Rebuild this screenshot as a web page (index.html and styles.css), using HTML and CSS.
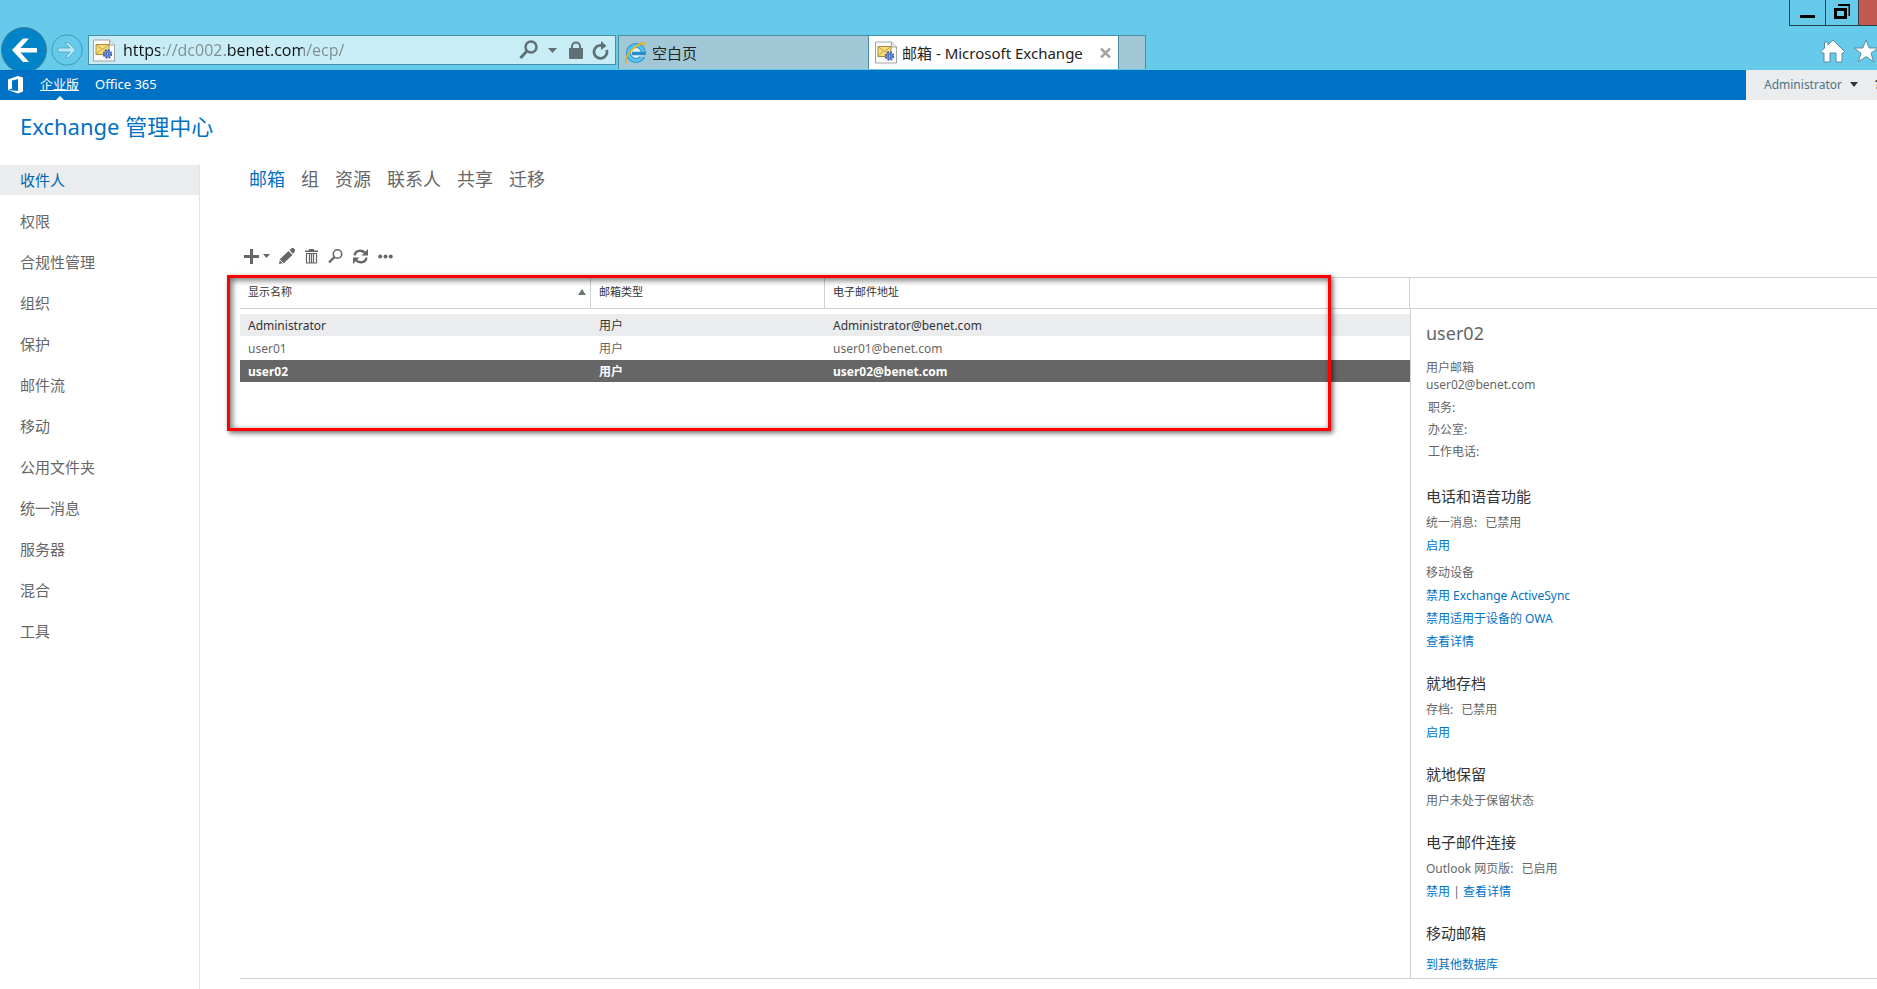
FILE: index.html
```html
<!DOCTYPE html>
<html lang="zh-CN">
<head>
<meta charset="utf-8">
<title>邮箱 - Microsoft Exchange</title>
<link rel="stylesheet" href="styles.css">
</head>
<body>
<svg class="defs" aria-hidden="true">
  <symbol id="page-icon" viewBox="0 0 22 22">
    <path d="M.5.5h16l5 5v16H.5z" fill="#fbfbfb" stroke="#a3a3a3"/>
    <path d="M16.500.5v5h5" fill="#e4e4e4" stroke="#a3a3a3"/>
    <path d="M3 5h13v10H3z" fill="#f6dc78" stroke="#a98b3c"/>
    <path d="M3 5l6.500 5L16 5M3 15l5-5M16 15l-5-5" fill="none" stroke="#b3923a" stroke-width=".8"/>
    <circle cx="14.500" cy="14.500" r="3.500" fill="#6d8fdc" stroke="#3f5fb3" stroke-width="2.400" stroke-dasharray="1.700 1.050"/>
    <circle cx="14.500" cy="14.500" r="2.800" fill="#6d8fdc"/>
    <circle cx="14.500" cy="14.500" r="1.200" fill="#dbe5fa" stroke="#2d4a9a" stroke-width=".8"/>
  </symbol>
</svg>
<div class="app">
  <header class="browser">
    <div class="window-controls">
      <button class="win-btn minimize" aria-label="最小化"><svg width="16" height="16" viewBox="0 0 16 16"><path d="M0 10h15v3H0z"/></svg></button>
      <button class="win-btn restore" aria-label="还原"><svg width="17" height="16" viewBox="0 0 17 16"><path d="M4 0h12v12h-1.500V2H4zM0 4h13v11H0zm3 3v5h7V7z" fill-rule="evenodd"/></svg></button>
      <button class="win-btn close" aria-label="关闭"></button>
    </div>
    <div class="nav-row">
      <button class="nav-btn back" aria-label="后退"><svg width="46" height="46" viewBox="0 0 46 46"><circle cx="23" cy="23" r="22.500" fill="#0083c7" stroke="#3f7f95"/><path d="M11 23L22 11.500h6L19.500 21H36v4.500H19.500L28 35h-6z" fill="#fff"/></svg></button>
      <button class="nav-btn forward" aria-label="前进"><svg width="32" height="32" viewBox="0 0 32 32"><circle cx="16" cy="16" r="15.200" fill="none" stroke="#4597b4"/><path d="M24.500 16L17.500 8.500H14l5 5.500H7v4h12l-5 5.500h3.500z" fill="#b9e9f8" stroke="#4aa1bf" stroke-width=".8"/></svg></button>
      <form class="address">
        <svg width="22" height="23"><use href="#page-icon"/></svg>
        <input class="url" type="text" aria-label="地址" value="https://dc002.benet.com/ecp/">
        <button type="button" class="plain" aria-label="搜索"><svg width="19" height="20" viewBox="0 0 19 20"><circle cx="12" cy="7" r="5.500" fill="none" stroke="#607175" stroke-width="2.500"/><path d="M8 11l-6.500 7" stroke="#607175" stroke-width="3"/></svg></button>
        <button type="button" class="plain caret" aria-label="搜索选项"><svg width="9" height="5" viewBox="0 0 9 5"><path d="M0 0h9L4.500 5z" fill="#607175"/></svg></button>
        <button type="button" class="plain lock" aria-label="安全报告"><svg width="14" height="18" viewBox="0 0 14 18"><path d="M0 7h14v10q0 1-1 1H1q-1 0-1-1z" fill="#607175"/><path d="M3 8V5.500C3 0 11 0 11 5.500V8" fill="none" stroke="#607175" stroke-width="2"/></svg></button>
        <button type="button" class="plain" aria-label="刷新"><svg width="17" height="19" viewBox="0 0 17 19"><path d="M10 4.500A6.500 6.500 0 1 0 14.700 9" fill="none" stroke="#607175" stroke-width="2.800"/><path d="M9 0l5.500 5L9 9z" fill="#607175"/></svg></button>
      </form>
      <div class="tabs">
        <button class="tab idle"><svg width="23" height="23" viewBox="0 0 23 23"><circle cx="12" cy="12" r="7.500" fill="#d9f2fb" stroke="#2b8ecb" stroke-width="5"/><circle cx="12" cy="12" r="7.500" fill="none" stroke="#59c5f0" stroke-width="3"/><path d="M8 12.500h13" stroke="#2b8ecb" stroke-width="3.500"/><path d="M16 16h6v-2h-6z" fill="#a2c8d7"/><path d="M3 22C-2 20 6 7 15 3c5-2.500 7-2 6 1.500C20 1.500 17 3 13 5.500 6 10-1 20 3 22z" fill="#ffd23c" stroke="#e5a812" stroke-width=".8"/></svg><span>空白页</span></button>
        <div class="tab active"><svg width="22" height="23"><use href="#page-icon"/></svg><span class="tab-title">邮箱 - Microsoft Exchange</span><button class="plain" aria-label="关闭选项卡"><svg width="11" height="10" viewBox="0 0 11 10"><path d="M1 .5l9 9M10 .5l-9 9" stroke="#a3a3a3" stroke-width="2.500"/></svg></button></div>
        <button class="tab new" aria-label="新建选项卡"></button>
      </div>
      <div class="tools">
        <button class="plain" aria-label="主页"><svg width="26" height="24" viewBox="0 0 26 24"><path d="M13 1l11.500 11.500-1 1.500H22v9h-6v-9h-6v9H4v-9H2L1 12.500 4.500 9V3H8v3z" fill="#fff" stroke="#5b8b9c"/></svg></button>
        <button class="plain" aria-label="收藏夹"><svg width="26" height="24" viewBox="0 0 26 24"><path d="M13 1l3.200 8H25l-7 5.200 2.600 8.600L13 17.600l-7.600 5.200L8 14.200 1 9h8.800z" fill="#fff" stroke="#5b8b9c"/></svg></button>
      </div>
    </div>
  </header>

  <nav class="suite">
    <svg class="office" width="17" height="18" viewBox="0 0 17 18"><path d="M0 3.500L10 0l5 1.500v14L10 17.500 0 14l10 1V3L4 4.500v8.200L0 14z" fill="#fff"/></svg>
    <a class="suite-link current" href="#">企业版</a>
    <a class="suite-link" href="#">Office 365</a>
    <div class="me">
      <button class="account">Administrator<svg width="8" height="5" viewBox="0 0 8 5"><path d="M0 0h8L4 5z" fill="#333"/></svg></button>
      <button class="help" aria-label="帮助">?</button>
    </div>
  </nav>

  <h1 class="title">Exchange 管理中心</h1>

  <div class="body">
    <nav class="side">
      <a class="side-link selected" href="#">收件人</a>
      <a class="side-link" href="#">权限</a>
      <a class="side-link" href="#">合规性管理</a>
      <a class="side-link" href="#">组织</a>
      <a class="side-link" href="#">保护</a>
      <a class="side-link" href="#">邮件流</a>
      <a class="side-link" href="#">移动</a>
      <a class="side-link" href="#">公用文件夹</a>
      <a class="side-link" href="#">统一消息</a>
      <a class="side-link" href="#">服务器</a>
      <a class="side-link" href="#">混合</a>
      <a class="side-link" href="#">工具</a>
    </nav>
    <main class="main">
      <nav class="pivots">
        <a class="pivot selected" href="#">邮箱</a>
        <a class="pivot" href="#">组</a>
        <a class="pivot" href="#">资源</a>
        <a class="pivot" href="#">联系人</a>
        <a class="pivot" href="#">共享</a>
        <a class="pivot" href="#">迁移</a>
      </nav>
      <div class="toolbar">
        <button class="plain add" aria-label="新建"><svg width="15" height="15" viewBox="0 0 15 15"><path d="M6 0h3v6h6v3H9v6H6V9H0V6h6z" fill="#666"/></svg><svg width="7" height="4" viewBox="0 0 7 4"><path d="M0 0h7L3.500 4z" fill="#666"/></svg></button>
        <button class="plain" aria-label="编辑"><svg width="16" height="16" viewBox="0 0 16 16"><path d="M0 16l1-5 8.500-8 4 4L5 15zM10.500 2L13 0h1.500L16 1.500V3l-2 3z" fill="#666"/><path d="M1 12l3 3" stroke="#fff"/></svg></button>
        <button class="plain" aria-label="删除"><svg width="13" height="15" viewBox="0 0 13 15"><path d="M4 0h5v1.500h4V3H0V1.500h4z" fill="#666"/><path d="M1.500 4.500h10v9.500h-10zM4.500 4v10M6.500 4v10M8.500 4v10" fill="none" stroke="#666" stroke-width="1.200"/></svg></button>
        <button class="plain" aria-label="搜索"><svg width="15" height="15" viewBox="0 0 15 15"><circle cx="9.500" cy="5" r="4.200" fill="none" stroke="#666" stroke-width="1.600"/><path d="M6.500 8L1 13.500" stroke="#666" stroke-width="2.400"/></svg></button>
        <button class="plain" aria-label="刷新"><svg width="15" height="15" viewBox="0 0 14 14"><path d="M1.500 6C2 1 8.500.5 11 3.500M12.500 8C12 13 5.500 13.500 3 10.500" fill="none" stroke="#666" stroke-width="2.200"/><path d="M14 0v6H8zM0 14V8h6z" fill="#666"/></svg></button>
        <button class="plain" aria-label="更多"><svg width="15" height="5" viewBox="0 0 15 5"><circle cx="2.200" cy="2.500" r="2"/><circle cx="7.500" cy="2.500" r="2"/><circle cx="12.800" cy="2.500" r="2"/></svg></button>
      </div>
      <div class="panes">
        <section class="list">
          <table class="grid">
            <colgroup><col class="col-name"><col class="col-type"><col></colgroup>
            <thead>
              <tr><th><div class="sort">显示名称<svg width="8" height="6" viewBox="0 0 8 6"><path d="M4 0l4 6H0z" fill="#667766"/></svg></div></th><th>邮箱类型</th><th>电子邮件地址</th></tr>
            </thead>
            <tbody>
              <tr class="hover"><td>Administrator</td><td>用户</td><td>Administrator@benet.com</td></tr>
              <tr><td>user01</td><td>用户</td><td>user01@benet.com</td></tr>
              <tr class="picked"><td>user02</td><td>用户</td><td>user02@benet.com</td></tr>
            </tbody>
          </table>
          <div class="marker"></div>
        </section>
        <aside class="detail">
          <div class="detail-head"></div>
          <div class="detail-body">
            <h2 class="name">user02</h2>
            <p class="tight">用户邮箱</p>
            <p class="tight">user02@benet.com</p>
            <div class="fields"><p>职务:</p><p>办公室:</p><p>工作电话:</p></div>
            <section class="group">
              <h3>电话和语音功能</h3>
              <p>统一消息:<span class="value">已禁用</span></p>
              <p><a href="#">启用</a></p>
              <div class="subgroup">
                <p>移动设备</p>
                <p><a href="#">禁用 Exchange ActiveSync</a></p>
                <p><a href="#">禁用适用于设备的 OWA</a></p>
                <p><a href="#">查看详情</a></p>
              </div>
            </section>
            <section class="group">
              <h3>就地存档</h3>
              <p>存档:<span class="value">已禁用</span></p>
              <p><a href="#">启用</a></p>
            </section>
            <section class="group">
              <h3>就地保留</h3>
              <p>用户未处于保留状态</p>
            </section>
            <section class="group">
              <h3>电子邮件连接</h3>
              <p>Outlook 网页版:<span class="value">已启用</span></p>
              <p><a href="#">禁用</a> | <a href="#">查看详情</a></p>
            </section>
            <section class="group move">
              <h3>移动邮箱</h3>
              <p><a href="#">到其他数据库</a></p>
            </section>
          </div>
        </aside>
      </div>
    </main>
  </div>
</div>
</body>
</html>
```
FILE: styles.css
```css
* { box-sizing: border-box; }
body {
  margin: 0;
  background: #fff;
  color: #666;
  font: 12px/23px "Noto Sans", "Noto Sans CJK SC", sans-serif;
}
h1, h2, h3, p { margin: 0; font-weight: 400; }
a { color: #0072c6; text-decoration: none; }
button { font: inherit; color: inherit; margin: 0; padding: 0; border: 0; background: none; }
svg { display: block; flex: none; }
.defs { position: absolute; width: 0; height: 0; }
.plain { display: flex; align-items: center; }
.app { display: flex; flex-direction: column; min-height: 100vh; overflow: hidden; }

/* Browser frame */
.browser { height: 70px; background: #66cbea; overflow: hidden; }
.window-controls { display: flex; justify-content: flex-end; height: 26px; }
.win-btn {
  display: flex;
  align-items: center;
  justify-content: center;
  border: 1px solid #23414b;
  border-width: 0 0 1px 1px;
}
.minimize { width: 36px; }
.restore { width: 33px; padding-bottom: 2px; }
.close { width: 19px; background: #c35a50; }
.nav-row { display: flex; align-items: flex-start; height: 44px; padding-left: 1px; }
.back { margin-top: 1px; }
.forward { margin: 8px 5px 0 4px; }
.address {
  display: flex;
  align-items: center;
  width: 528px;
  height: 30px;
  margin-top: 9px;
  padding: 0 6px 0 4px;
  border: 1px solid #4a8ea3;
  background: #c9edf7;
}
.url {
  flex: 1;
  min-width: 0;
  height: 26px;
  margin-left: 8px;
  padding: 0;
  border: 0;
  color: transparent;
  font: 16px/26px "Open Sans", sans-serif;
  background: linear-gradient(90deg, #111 37px, #7d8c90 37px 102px, #111 102px 180px, #7d8c90 180px);
  -webkit-background-clip: text;
  background-clip: text;
}
.caret { margin: 0 12px 0 10px; }
.lock { margin-right: 9px; }
.tabs { display: flex; height: 34px; margin: 9px 0 0 2px; border: 1px solid #4a8ea3; border-bottom: 0; }
.tab { display: flex; align-items: center; height: 33px; font-size: 15px; color: #222; white-space: nowrap; }
.idle { width: 249px; padding-left: 5px; gap: 5px; background: #a2c8d7; }
.active { width: 251px; padding: 0 7px 0 6px; gap: 5px; background: #fff; border: 1px solid #4a8ea3; border-width: 0 1px; }
.tab span { padding-top: 1px; }
.tab-title { flex: 1; }
.new { width: 26px; background: #a2c8d7; }
.tools { display: flex; gap: 7px; margin: 13px -2px 0 auto; }

/* Suite bar */
.suite { display: flex; align-items: center; height: 30px; padding-left: 8px; background: #0072c6; }
.suite-link { height: 30px; color: #fff; font-size: 13px; line-height: 28px; margin-left: 16px; }
.current { position: relative; margin-left: 15px; text-decoration: underline; }
.current::after {
  content: "";
  position: absolute;
  left: 50%;
  bottom: 0;
  margin-left: -4px;
  border: 4px solid transparent;
  border-width: 0 4px 4px;
  border-bottom-color: #fff;
}
.me {
  display: flex;
  width: 131px;
  height: 30px;
  margin-left: auto;
  padding-left: 18px;
  overflow: hidden;
  background: #ebecee;
}
.account { display: flex; flex: none; align-items: center; gap: 8px; height: 28px; color: #4f7387; }
.help { margin-left: 17px; height: 28px; color: #333; font-weight: 700; }
.title { padding: 11px 20px 0; height: 65px; font-size: 22px; line-height: 30px; color: #0072c6; }

/* Page body */
.body { display: flex; flex: 1; }
.side { display: flex; flex-direction: column; gap: 11px; width: 200px; border-right: 1px solid #e2e2e2; }
.side-link { height: 30px; padding-left: 20px; font-size: 15px; line-height: 30px; color: #666; }
.side .selected { background: #ebecee; color: #0067b0; }
.main { display: flex; flex-direction: column; flex: 1; min-width: 0; padding: 0 0 10px 40px; }
.pivots { display: flex; gap: 16px; padding-left: 9px; font-size: 18px; line-height: 28px; }
.pivot { color: #666; }
.pivots .selected { color: #0072c6; }
.toolbar { display: flex; align-items: center; gap: 10px; height: 16px; margin: 55px 0 13px; padding-left: 4px; fill: #666; }
.add { gap: 4px; margin-right: -1px; }

.panes { display: flex; flex: 1; border-top: 1px solid #ccd3d6; border-bottom: 1px solid #ccd3d6; }
.list { position: relative; flex: 1; min-width: 0; }
.grid { width: 100%; table-layout: fixed; border-spacing: 0; }
.col-name { width: 30%; }
.col-type { width: 20%; }
.grid th {
  height: 31px;
  padding: 0 4px 2px 8px;
  border: 1px solid #ccd3d6;
  border-width: 0 1px 1px 0;
  font-size: 11px;
  font-weight: 400;
  line-height: 16px;
  text-align: left;
  color: #333;
}
.sort { display: flex; align-items: center; justify-content: space-between; }
.grid tbody::before { content: ""; display: block; height: 5px; }
.grid td { height: 23px; padding: 1px 8px 0; border-bottom: 1px solid #fff; line-height: 21px; background-clip: padding-box; }
.hover td { background-color: #ebecee; color: #333; }
.picked td { background-color: #666; color: #fff; font-weight: 700; }
.marker {
  position: absolute;
  top: -3px;
  left: -13px;
  right: 79px;
  height: 156px;
  border: 3px solid #f00;
  box-shadow: 2px 2px 5px rgba(0, 0, 0, .6), inset 2px 2px 6px rgba(0, 0, 0, .6);
}

/* Details pane */
.detail { display: flex; flex-direction: column; width: 467px; }
.detail-head { height: 31px; border-bottom: 1px solid #ccd3d6; }
.detail-body { flex: 1; padding: 11px 16px 0 15px; border-left: 1px solid #ccd3d6; }
.name { font-size: 18px; line-height: 26px; margin-bottom: 13px; }
.tight { line-height: 17px; }
.fields { padding: 4px 0 3px 2px; line-height: 22px; }
.group { margin-top: 19px; }
.group h3 { margin-bottom: 3px; font-size: 15px; line-height: 23px; color: #333; }
.move h3 { margin-bottom: 8px; }
.value { margin-left: 8px; }
.subgroup { margin-top: 4px; }
```
